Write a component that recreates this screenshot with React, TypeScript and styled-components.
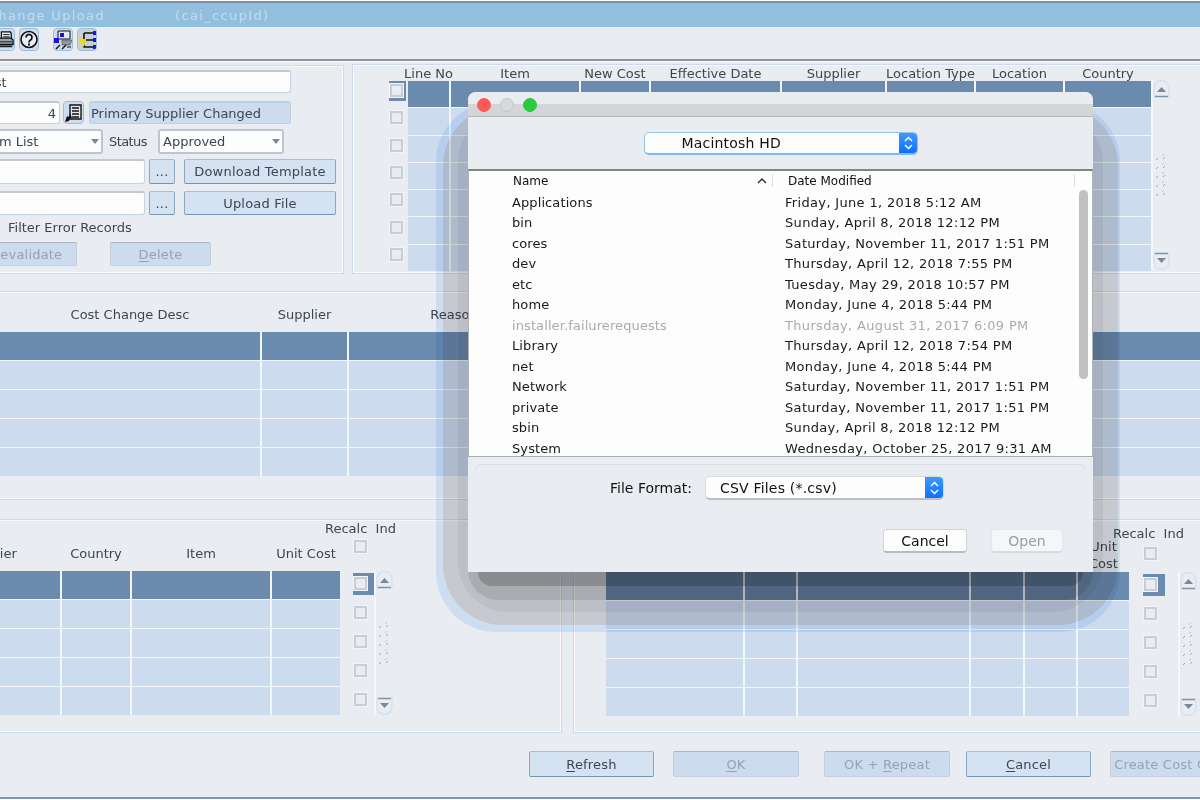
import { ReactElement, ReactNode } from 'react'
import styled, { createGlobalStyle } from 'styled-components'

const GlobalStyle = createGlobalStyle`
    html, body {
        margin: 0;
        padding: 0;
        background: #fdfdfe;
    }
    #root {
        width: 1200px;
        height: 800px;
    }
`

const PAGE = '#e9ecf1'
const DARK = '#6a8aae'
const ROW = '#ccdbee'
const TEXT = '#3d4650'

const Frame = styled.div`
    position: relative;
    width: 1200px;
    height: 800px;
    overflow: hidden;
    background: #fdfdfe;
    font-family: 'DejaVu Sans', sans-serif;
    font-size: 13px;
    color: ${TEXT};
`

const Window = styled.div`
    margin-top: 1px;
    height: 796px;
    background: ${PAGE};
    border-bottom: 2px solid #7c97ae;
    display: flex;
    flex-direction: column;
`

const TitleBar = styled.div`
    height: 24px;
    flex: none;
    border-top: 2px solid #7592ab;
    background: #93bfdf;
    color: #c6dcec;
    font-size: 13px;
    letter-spacing: 1.35px;
    display: flex;
    align-items: center;
    white-space: nowrap;

    span:first-child {
        margin-left: -12px;
        width: 187px;
    }
`

const Toolbar = styled.div`
    height: 34px;
    flex: none;
    display: flex;
    align-items: flex-start;
    padding-top: 1px;
    box-sizing: border-box;
    border-bottom: 2px solid #909498;
    box-shadow: 0 1px 0 #fff;
`

const ToolButton = styled.div<{ $left?: number; $width?: number; $grey?: boolean }>`
    width: ${(p) => p.$width ?? 20}px;
    height: 23px;
    margin-left: ${(p) => p.$left ?? 0}px;
    flex: none;
    box-sizing: border-box;
    border: 1px solid #a3bcd6;
    border-radius: 4px;
    background: ${(p) => (p.$grey ? '#c5d0db' : '#cddcee')};
    display: flex;
    align-items: center;
    justify-content: center;
    overflow: hidden;
`

const TopSection = styled.div`
    height: 210px;
    margin-top: 3px;
    flex: none;
    display: flex;
    align-items: flex-start;
`

const Panel = styled.div`
    box-sizing: border-box;
    border: 1px solid #ccdcee;
    box-shadow: inset 0 0 0 1px #f7f9fb;
`

const FormPanel = styled(Panel)`
    width: 368px;
    height: 209px;
    margin: 1px 0 0 -24px;
    flex: none;
    padding-top: 4px;
`

const FormRow = styled.div<{ $top?: number; $h?: number }>`
    display: flex;
    align-items: center;
    height: ${(p) => p.$h ?? 24}px;
    margin-top: ${(p) => p.$top ?? 0}px;
`

const Field = styled.div<{ $w: number; $right?: boolean; $left?: number }>`
    width: ${(p) => p.$w}px;
    height: 100%;
    margin-left: ${(p) => p.$left ?? 0}px;
    flex: none;
    box-sizing: border-box;
    border: 1px solid #c4d3e4;
    border-top: 2px solid #bfc9d4;
    border-radius: 3px;
    background: #fdfdfe;
    padding: 0 3px;
    display: flex;
    align-items: center;
    justify-content: ${(p) => (p.$right ? 'flex-end' : 'flex-start')};
    white-space: nowrap;
`

const ReadOnly = styled(Field)`
    background: ${ROW};
    border-color: #bfd0e3;
    padding: 0 1px;
`

const Select = styled(Field)`
    border: 2px solid #bcc5d0;
    justify-content: space-between;
    padding-right: 2px;

    i {
        width: 0;
        height: 0;
        border-left: 4px solid transparent;
        border-right: 4px solid transparent;
        border-top: 5px solid #76889c;
    }
`

const FormLabel = styled.span<{ $left: number; $w?: number }>`
    margin-left: ${(p) => p.$left}px;
    width: ${(p) => (p.$w ? `${p.$w}px` : 'auto')};
    letter-spacing: ${(p) => (p.$w ? '-0.6px' : '0')};
    flex: none;
    white-space: nowrap;
`

const AppButton = styled.div<{ $w: number; $left?: number; $off?: boolean }>`
    width: ${(p) => p.$w}px;
    height: 100%;
    margin-left: ${(p) => p.$left ?? 0}px;
    flex: none;
    box-sizing: border-box;
    border-radius: 2px;
    border: 1px solid ${(p) => (p.$off ? '#c3ced9' : '#8ba6c2')};
    border-top-color: ${(p) => (p.$off ? '#a9b6c4' : '#aebdcc')};
    border-bottom-color: ${(p) => (p.$off ? '#c3d2e3' : '#7393b4')};
    background: ${(p) => (p.$off ? ROW : '#d5e2f2')};
    color: ${(p) => (p.$off ? '#97a3b0' : TEXT)};
    display: flex;
    align-items: center;
    justify-content: center;
    white-space: nowrap;
    overflow: hidden;
    letter-spacing: 0.2px;

    u {
        text-underline-offset: 2px;
    }
`

const GridPanel = styled(Panel)`
    width: 860px;
    height: 210px;
    margin-left: 8px;
    flex: none;
    display: flex;
    align-items: flex-start;
    padding-left: 36px;
`

const TableWrap = styled.div<{ $w?: number; $left?: number }>`
    width: ${(p) => (p.$w ? `${p.$w}px` : 'auto')};
    margin-left: ${(p) => p.$left ?? 0}px;
    flex: none;
`

const HeadRow = styled.div<{ $cols: string; $top?: number; $h?: number; $bottom?: number }>`
    display: grid;
    grid-template-columns: ${(p) => p.$cols};
    column-gap: 2px;
    height: ${(p) => p.$h ?? 20}px;
    margin-top: ${(p) => p.$top ?? 0}px;
    margin-bottom: ${(p) => p.$bottom ?? 0}px;

    span {
        display: flex;
        align-items: center;
        justify-content: center;
        text-align: center;
        white-space: pre;
        line-height: 17px;
    }
`

const Table = styled.div<{ $cols: string; $rowH: number }>`
    display: grid;
    grid-template-columns: ${(p) => p.$cols};
    grid-auto-rows: ${(p) => p.$rowH}px;
    gap: 1px 2px;
    background: #f3f6fa;
`

const Cell = styled.div<{ $head?: boolean }>`
    background: ${(p) => (p.$head ? DARK : ROW)};
`

const CheckCol = styled.div<{ $w: number; $left?: number; $top?: number }>`
    width: ${(p) => p.$w}px;
    margin-left: ${(p) => p.$left ?? 0}px;
    padding-top: ${(p) => p.$top ?? 0}px;
    flex: none;
    display: flex;
    flex-direction: column;
`

const CheckSlot = styled.div<{ $h: number; $on?: boolean; $mark: number }>`
    height: ${(p) => p.$h}px;
    display: flex;
    align-items: center;
    position: relative;
    padding-left: 1px;

    &::before {
        content: '';
        display: ${(p) => (p.$on ? 'block' : 'none')};
        position: absolute;
        left: 0;
        width: ${(p) => p.$mark}px;
        top: 4px;
        bottom: 3px;
        background: ${DARK};
    }
`

const Check = styled.div`
    position: relative;
    width: 13px;
    height: 13px;
    box-sizing: border-box;
    border: 2px solid #c9ced5;
    box-shadow: 0 0 0 1px #f2f4f7;
    background: ${PAGE};
`

const RecalcLabel = styled.div<{ $left: number }>`
    height: 17px;
    margin-left: ${(p) => p.$left}px;
    white-space: pre;
    display: flex;
    align-items: center;
`

const HeaderCheck = styled.div<{ $top: number; $bottom: number }>`
    margin: ${(p) => p.$top}px 0 ${(p) => p.$bottom}px 1px;
`

const ScrollCol = styled.div<{ $h: number; $top: number; $left?: number }>`
    height: ${(p) => p.$h}px;
    width: 18px;
    margin-top: ${(p) => p.$top}px;
    margin-left: ${(p) => p.$left ?? 0}px;
    flex: none;
    box-sizing: border-box;
    border-left: 2px solid #f5f7fa;
    display: flex;
    flex-direction: column;
    justify-content: space-between;
    align-items: center;
`

const ArrowSvg = styled.svg<{ $down?: boolean }>`
    transform: ${(p) => (p.$down ? 'scaleY(-1)' : 'none')};
`

const WideSection = styled.div`
    height: 209px;
    margin-top: 17px;
    flex: none;
    box-sizing: border-box;
    border-top: 1px solid #ccdcee;
    border-bottom: 1px solid #ccdcee;
    box-shadow: inset 0 1px 0 #f7f9fb, inset 0 -1px 0 #f7f9fb;
    padding-top: 12px;
`

const BottomSection = styled.div`
    height: 214px;
    margin-top: 19px;
    flex: none;
    display: flex;
`

const SubPanel = styled.div<{ $w: number; $left: number }>`
    width: ${(p) => p.$w}px;
    margin-left: ${(p) => p.$left}px;
    flex: none;
    box-sizing: border-box;
    border: 1px solid #ccdcee;
    box-shadow: inset 0 0 0 1px #f7f9fb;
    display: flex;
    align-items: flex-start;
`

const ActionBar = styled.div`
    flex: 1;
    padding: 18px 0 20px 529px;
    display: flex;
    white-space: nowrap;
`

/* file chooser, floats over the form */
const Dialog = styled.div`
    position: absolute;
    left: 468px;
    top: 92px;
    width: 625px;
    height: 480px;
    color: #111;
    font-size: 13px;
`

const ShadowRing = styled.div<{ $l: number; $t: number; $r: number; $b: number; $c: string; $rad: number }>`
    position: absolute;
    left: ${(p) => p.$l}px;
    top: ${(p) => p.$t}px;
    right: ${(p) => p.$r}px;
    bottom: ${(p) => p.$b}px;
    background: ${(p) => p.$c};
    border-radius: ${(p) => p.$rad}px;
    mix-blend-mode: multiply;
`

const DialogBody = styled.div`
    position: relative;
    height: 100%;
    background: ${PAGE};
    border-radius: 8px 8px 0 0;
    display: flex;
    flex-direction: column;
    overflow: hidden;
`

const TitleStrip = styled.div`
    height: 25px;
    flex: none;
    box-sizing: border-box;
    background: linear-gradient(${PAGE} 0, ${PAGE} 12px, #d4d5d6 12px);
    border-bottom: 1px solid #b4b6b8;
    display: flex;
    align-items: center;
    gap: 9px;
    padding: 1px 0 0 9px;
`

const Light = styled.div<{ $c: string; $ring?: string }>`
    width: 14px;
    height: 14px;
    border-radius: 50%;
    background: ${(p) => p.$c};
    box-sizing: border-box;
    border: 1px solid ${(p) => p.$ring ?? p.$c};
`

const VolumeArea = styled.div`
    height: 52px;
    flex: none;
    padding-top: 15px;
    box-sizing: border-box;
    display: flex;
    justify-content: center;
    align-items: flex-start;
`

const MacSelect = styled.div<{ $w: number; $h: number; $blue?: boolean; $size: number; $pad: number }>`
    width: ${(p) => p.$w}px;
    height: ${(p) => p.$h}px;
    flex: none;
    box-sizing: border-box;
    background: #fdfdfe;
    border-radius: 5px;
    border: 1px solid ${(p) => (p.$blue ? '#93c2ee' : '#d8dadd')};
    border-bottom: 2px solid ${(p) => (p.$blue ? '#86b9ea' : '#bcbfc3')};
    font-size: ${(p) => p.$size}px;
    display: flex;
    align-items: center;
    justify-content: space-between;
    padding-left: ${(p) => p.$pad}px;
    overflow: hidden;
    letter-spacing: 0.2px;
`

const Stepper = styled.div`
    width: 19px;
    height: calc(100% + 3px);
    margin-right: -1px;
    background: linear-gradient(#3f9cfb, #0b6dfb);
    display: flex;
    align-items: center;
    justify-content: center;
`

const FileList = styled.div`
    position: relative;
    height: 287px;
    flex: none;
    box-sizing: border-box;
    border-top: 2px solid #818385;
    border-left: 1px solid #b0b3b6;
    border-right: 1px solid #b0b3b6;
    background: #fdfdfe;
    overflow: hidden;
`

const ListHead = styled.div`
    height: 21px;
    position: relative;
    font-size: 12px;
`

const HeadText = styled.span<{ $x: number }>`
    position: absolute;
    left: ${(p) => p.$x}px;
    top: 3px;
`

const HeadDivider = styled.i<{ $x: number }>`
    position: absolute;
    left: ${(p) => p.$x}px;
    top: 3px;
    width: 1px;
    height: 13px;
    background: #dcdee0;
`

const HeadCaret = styled.svg`
    position: absolute;
    left: 288px;
    top: 6px;
`

const FileRow = styled.div<{ $dim?: boolean }>`
    height: 20.5px;
    display: grid;
    grid-template-columns: 273px 1fr;
    padding-left: 43px;
    align-items: center;
    white-space: nowrap;
    color: ${(p) => (p.$dim ? '#a9abad' : '#1a1a1a')};
    letter-spacing: 0.1px;

    span:last-child {
        letter-spacing: 0.33px;
    }
`

const ListThumb = styled.div`
    position: absolute;
    left: 610px;
    top: 19px;
    width: 9px;
    height: 189px;
    border-radius: 5px;
    background: #bfc1c3;
`

const DialogFooter = styled.div`
    flex: 1;
    border-top: 1px solid #a9adb1;
    padding: 7px 8px 0;
`

const InsetLine = styled.div`
    height: 5px;
    border: 1px solid #d9dce0;
    border-bottom: none;
    border-radius: 5px 5px 0 0;
`

const FormatRow = styled.div`
    display: flex;
    align-items: center;
    height: 24px;
    margin-top: 6px;
    padding-left: 134px;
    gap: 13px;
    font-size: 14px;
`

const DialogButtons = styled.div`
    display: flex;
    justify-content: flex-end;
    gap: 24px;
    margin-top: 29px;
    padding-right: 22px;
`

const MacButton = styled.div<{ $w: number; $off?: boolean }>`
    width: ${(p) => p.$w}px;
    height: 24px;
    box-sizing: border-box;
    background: ${(p) => (p.$off ? '#f5f6f8' : '#fdfdfe')};
    border: 1px solid ${(p) => (p.$off ? '#e4e6e9' : '#d0d2d5')};
    border-bottom: 2px solid ${(p) => (p.$off ? '#d9dbde' : '#b9bbbe')};
    border-radius: 4px;
    color: ${(p) => (p.$off ? '#9b9d9f' : '#111')};
    font-size: 14px;
    display: flex;
    align-items: center;
    justify-content: center;
`

function ScrollArrow({ up }: { up?: boolean }): ReactElement {
    return (
        <ArrowSvg width='17' height='19' viewBox='0 0 17 19' $down={!up}>
            <path d='M1 18V8a7.5 7.5 0 0 1 15 0v10' fill='none' stroke='#d3e1f0' strokeWidth='1.5' />
            <path d='M4 12l4.5-5 4.5 5z' fill='#7689a0' />
            <path d='M2 16.5h13' stroke='#7f93ab' strokeWidth='1.5' />
        </ArrowSvg>
    )
}

function Grip(): ReactElement {
    const ticks = [0, 9, 18, 27, 36]
    return (
        <svg width='12' height='42' viewBox='0 0 12 42'>
            {ticks.map((y) => (
                <g key={y} stroke='#8fabcb' strokeWidth='1'>
                    <path d={`M1 ${y + 6}l2-2`} />
                    <path d={`M7 ${y + 2}l2-2`} stroke='#b7cbe1' />
                    <path d={`M8 ${y + 5}l2-2`} />
                </g>
            ))}
        </svg>
    )
}

function Scroller({ h, top, left }: { h: number; top: number; left?: number }): ReactElement {
    return (
        <ScrollCol $h={h} $top={top} $left={left}>
            <ScrollArrow up />
            <Grip />
            <ScrollArrow />
        </ScrollCol>
    )
}

function StepperIcon(): ReactElement {
    return (
        <svg width='11' height='18' viewBox='0 0 11 18' fill='none' stroke='#fff' strokeWidth='1.5'>
            <path d='M2 7l3.5-3.5L9 7' />
            <path d='M2 11l3.5 3.5L9 11' />
        </svg>
    )
}

function PrinterIcon(): ReactElement {
    return (
        <svg width='20' height='20' viewBox='0 0 20 20'>
            <path d='M6 1h10l1 2v6H6z' fill='#e2e7ed' stroke='#111' strokeWidth='1.4' />
            <path d='M8 4h7M8 6.5h7' stroke='#111' />
            <path d='M1 10l3-2h13l2 2v5H1z' fill='#9aa5b0' stroke='#111' strokeWidth='1.4' />
            <path d='M2 12h16' stroke='#111' />
            <path d='M2 16h16v2H2z' fill='#222' />
        </svg>
    )
}

function HelpIcon(): ReactElement {
    return (
        <svg width='18' height='19' viewBox='0 0 18 19'>
            <circle cx='9' cy='9.5' r='8' fill='#e9eef4' stroke='#111' strokeWidth='1.6' />
            <path d='M6 7.5a3 3 0 1 1 4.6 2.5C9.4 10.8 9 11.3 9 12.5' fill='none' stroke='#111' strokeWidth='1.8' />
            <path d='M8 13.5h2v2H8z' fill='#111' />
        </svg>
    )
}

function NetworkIcon(): ReactElement {
    return (
        <svg width='18' height='20' viewBox='0 0 18 20'>
            <path d='M4 1h12v8H4z' fill='#e4e9ef' stroke='#111' />
            <path d='M6 3h4v4H6z' fill='#1414e0' />
            <path d='M0 8h5v5H0z' fill='#1414e0' />
            <path d='M8 10h10l-2 5H8z' fill='#8d98a4' stroke='#555' strokeWidth='0.7' />
            <path d='M2 19l4-4M8 19l4-4' stroke='#111' strokeWidth='1.4' />
            <path d='M13 16h4v2h-4z' fill='#777' />
        </svg>
    )
}

function TreeIcon(): ReactElement {
    return (
        <svg width='18' height='20' viewBox='0 0 18 20'>
            <path d='M6 3h9M6 3v14h9M6 10h9' fill='none' stroke='#111' strokeWidth='1.6' />
            <path d='M15 1h3v4h-3zM15 8h3v4h-3zM15 15h3v4h-3z' fill='#1414e0' />
            <path d='M0 11l5-4v2h3v4L5 17l-1-4H2z' fill='#e8d820' />
        </svg>
    )
}

function ListIcon(): ReactElement {
    return (
        <svg width='19' height='20' viewBox='0 0 19 20'>
            <path d='M6 2h11v14H6z' fill='#e4e9ef' stroke='#111' strokeWidth='1.4' />
            <path d='M8 5h7M8 8h7M8 11h7M8 14h7' stroke='#111' strokeWidth='1.3' />
            <path d='M1 19l2-6 2 1 1-4 2 5-2 0-1 3z' fill='#111' />
        </svg>
    )
}

const topCols = '41px 128px 68px 129px 103px 87px 87px 86px'
const topLabels = ['Line No', 'Item', 'New Cost', 'Effective Date', 'Supplier', 'Location Type', 'Location', 'Country']
const midCols = '260px 85px 210px 660px'
const midLabels = ['Cost Change Desc', 'Supplier', 'Reason', '']
const leftCols = '140px 68px 138px 68px'
const leftLabels = ['Supplier', 'Country', 'Item', 'Unit Cost']
const rightCols = '137px 51px 171px 52px 51px 51px'
const rightLabels = ['', '', '', '', '', 'Unit\nCost']

const files: [string, string, boolean?][] = [
    ['Applications', 'Friday, June 1, 2018 5:12 AM'],
    ['bin', 'Sunday, April 8, 2018 12:12 PM'],
    ['cores', 'Saturday, November 11, 2017 1:51 PM'],
    ['dev', 'Thursday, April 12, 2018 7:55 PM'],
    ['etc', 'Tuesday, May 29, 2018 10:57 PM'],
    ['home', 'Monday, June 4, 2018 5:44 PM'],
    ['installer.failurerequests', 'Thursday, August 31, 2017 6:09 PM', true],
    ['Library', 'Thursday, April 12, 2018 7:54 PM'],
    ['net', 'Monday, June 4, 2018 5:44 PM'],
    ['Network', 'Saturday, November 11, 2017 1:51 PM'],
    ['private', 'Saturday, November 11, 2017 1:51 PM'],
    ['sbin', 'Sunday, April 8, 2018 12:12 PM'],
    ['System', 'Wednesday, October 25, 2017 9:31 AM'],
]

const rings = [
    { l: -32, t: 10, r: -27, b: -60, c: '#e2f0ff', rad: 60 },
    { l: -25, t: 14, r: -25, b: -53, c: '#f6e8dc', rad: 60 },
    { l: -10, t: 20, r: -10, b: -40, c: '#f2f2f2', rad: 50 },
    { l: 0, t: 20, r: 0, b: -28, c: '#e6e6e6', rad: 30 },
    { l: 10, t: 20, r: 10, b: -14, c: '#d0d0d0', rad: 14 },
]

function DataTable({ cols, rows, rowH }: { cols: string; rows: number; rowH: number }): ReactElement {
    const n = cols.split(' ').length
    const cells: ReactNode[] = []
    for (let r = 0; r < rows; r++) {
        for (let c = 0; c < n; c++) {
            cells.push(<Cell key={`${r}-${c}`} $head={r === 0} />)
        }
    }
    return (
        <Table $cols={cols} $rowH={rowH}>
            {cells}
        </Table>
    )
}

function Labels({ cols, labels, top, h, bottom }: { cols: string; labels: string[]; top?: number; h?: number; bottom?: number }): ReactElement {
    return (
        <HeadRow $cols={cols} $top={top} $h={h} $bottom={bottom}>
            {labels.map((label, idx) => (
                <span key={`label-${idx}`}>{label}</span>
            ))}
        </HeadRow>
    )
}

function Checks({ count, h, mark }: { count: number; h: number; mark: number }): ReactElement {
    return (
        <>
            {Array.from({ length: count }).map((_, idx) => (
                <CheckSlot key={`check-${idx}`} $h={h} $on={idx === 0} $mark={mark}>
                    <Check />
                </CheckSlot>
            ))}
        </>
    )
}

function FileChooser(): ReactElement {
    return (
        <Dialog>
            {rings.map((ring) => (
                <ShadowRing key={ring.c} $l={ring.l} $t={ring.t} $r={ring.r} $b={ring.b} $c={ring.c} $rad={ring.rad} />
            ))}
            <DialogBody>
                <TitleStrip>
                    <Light $c='#fc5a55' />
                    <Light $c='#d8d9da' $ring='#c4c5c7' />
                    <Light $c='#2bc93f' />
                </TitleStrip>
                <VolumeArea>
                    <MacSelect $w={274} $h={23} $blue $size={14} $pad={37}>
                        Macintosh HD
                        <Stepper>
                            <StepperIcon />
                        </Stepper>
                    </MacSelect>
                </VolumeArea>
                <FileList>
                    <ListHead>
                        <HeadText $x={44}>Name</HeadText>
                        <HeadCaret width='10' height='7' viewBox='0 0 10 7'>
                            <path d='M1 6l4-4 4 4' fill='none' stroke='#333' strokeWidth='1.5' />
                        </HeadCaret>
                        <HeadDivider $x={303} />
                        <HeadText $x={319}>Date Modified</HeadText>
                        <HeadDivider $x={605} />
                    </ListHead>
                    {files.map(([name, date, dim]) => (
                        <FileRow key={name} $dim={dim}>
                            <span>{name}</span>
                            <span>{date}</span>
                        </FileRow>
                    ))}
                    <ListThumb />
                </FileList>
                <DialogFooter>
                    <InsetLine />
                    <FormatRow>
                        File Format:
                        <MacSelect $w={239} $h={24} $size={14} $pad={14}>
                            CSV Files (*.csv)
                            <Stepper>
                                <StepperIcon />
                            </Stepper>
                        </MacSelect>
                    </FormatRow>
                    <DialogButtons>
                        <MacButton $w={84}>Cancel</MacButton>
                        <MacButton $w={72} $off>
                            Open
                        </MacButton>
                    </DialogButtons>
                </DialogFooter>
            </DialogBody>
        </Dialog>
    )
}

function App(): ReactElement {
    return (
        <>
            <GlobalStyle />
            <Frame>
                <Window>
                    <TitleBar>
                        <span>Change Upload</span>
                        <span>(cai_ccupId)</span>
                    </TitleBar>
                    <Toolbar>
                        <ToolButton $left={-5}>
                            <PrinterIcon />
                        </ToolButton>
                        <ToolButton $left={4}>
                            <HelpIcon />
                        </ToolButton>
                        <ToolButton $left={14}>
                            <NetworkIcon />
                        </ToolButton>
                        <ToolButton $left={4} $grey>
                            <TreeIcon />
                        </ToolButton>
                    </Toolbar>
                    <TopSection>
                        <FormPanel>
                            <FormRow $h={23}>
                                <Field $w={314}>Test</Field>
                            </FormRow>
                            <FormRow $h={23} $top={8}>
                                <Field $w={83} $right>
                                    4
                                </Field>
                                <ToolButton $left={3} $width={21}>
                                    <ListIcon />
                                </ToolButton>
                                <ReadOnly $w={202} $left={5}>
                                    Primary Supplier Changed
                                </ReadOnly>
                            </FormRow>
                            <FormRow $h={25} $top={5}>
                                <Select $w={126}>
                                    Item List
                                    <i />
                                </Select>
                                <FormLabel $left={6} $w={38}>
                                    Status
                                </FormLabel>
                                <Select $w={126} $left={11}>
                                    Approved
                                    <i />
                                </Select>
                            </FormRow>
                            <FormRow $h={25} $top={5}>
                                <Field $w={168} />
                                <AppButton $w={26} $left={4}>
                                    ...
                                </AppButton>
                                <AppButton $w={152} $left={9}>
                                    Download Template
                                </AppButton>
                            </FormRow>
                            <FormRow $h={24} $top={7}>
                                <Field $w={168} />
                                <AppButton $w={26} $left={4}>
                                    ...
                                </AppButton>
                                <AppButton $w={152} $left={9}>
                                    Upload File
                                </AppButton>
                            </FormRow>
                            <FormRow $h={20} $top={2}>
                                <FormLabel $left={31}>Filter Error Records</FormLabel>
                            </FormRow>
                            <FormRow $h={24} $top={5}>
                                <AppButton $w={100} $off>
                                    Revalidate
                                </AppButton>
                                <AppButton $w={101} $left={33} $off>
                                    <span>
                                        <u>D</u>elete
                                    </span>
                                </AppButton>
                            </FormRow>
                        </FormPanel>
                        <GridPanel>
                            <CheckCol $w={19} $top={12}>
                                <Checks count={7} h={27.3} mark={17} />
                            </CheckCol>
                            <TableWrap>
                                <Labels cols={topCols} labels={topLabels} h={15} bottom={1} />
                                <DataTable cols={topCols} rows={7} rowH={26.3} />
                            </TableWrap>
                            <Scroller h={190} top={15} />
                        </GridPanel>
                    </TopSection>
                    <WideSection>
                        <Labels cols={midCols} labels={midLabels} h={20} bottom={8} />
                        <DataTable cols={midCols} rows={5} rowH={28} />
                    </WideSection>
                    <BottomSection>
                        <SubPanel $w={643} $left={-81}>
                            <TableWrap $w={420}>
                                <Labels cols={leftCols} labels={leftLabels} top={23} h={20} bottom={8} />
                                <DataTable cols={leftCols} rows={5} rowH={28} />
                            </TableWrap>
                            <CheckCol $w={21} $left={13}>
                                <RecalcLabel $left={-28}>{'Recalc  Ind'}</RecalcLabel>
                                <HeaderCheck $top={3} $bottom={16}>
                                    <Check />
                                </HeaderCheck>
                                <Checks count={5} h={29} mark={21} />
                            </CheckCol>
                            <Scroller h={144} top={51} />
                        </SubPanel>
                        <SubPanel $w={640} $left={11}>
                            <TableWrap $w={523} $left={32}>
                                <Labels cols={rightCols} labels={rightLabels} top={18} h={34} />
                                <DataTable cols={rightCols} rows={5} rowH={28} />
                            </TableWrap>
                            <CheckCol $w={35} $left={14} $top={5}>
                                <RecalcLabel $left={-30}>{'Recalc  Ind'}</RecalcLabel>
                                <HeaderCheck $top={5} $bottom={10}>
                                    <Check />
                                </HeaderCheck>
                                <Checks count={5} h={29} mark={22} />
                            </CheckCol>
                            <Scroller h={144} top={52} />
                        </SubPanel>
                    </BottomSection>
                    <ActionBar>
                        <AppButton $w={125}>
                            <span>
                                <u>R</u>efresh
                            </span>
                        </AppButton>
                        <AppButton $w={126} $left={19} $off>
                            <span>
                                <u>O</u>K
                            </span>
                        </AppButton>
                        <AppButton $w={126} $left={25} $off>
                            <span>
                                OK + <u>R</u>epeat
                            </span>
                        </AppButton>
                        <AppButton $w={125} $left={16}>
                            <span>
                                <u>C</u>ancel
                            </span>
                        </AppButton>
                        <AppButton $w={142} $left={19} $off>
                            Create Cost Change
                        </AppButton>
                    </ActionBar>
                </Window>
                <FileChooser />
            </Frame>
        </>
    )
}

export default App
